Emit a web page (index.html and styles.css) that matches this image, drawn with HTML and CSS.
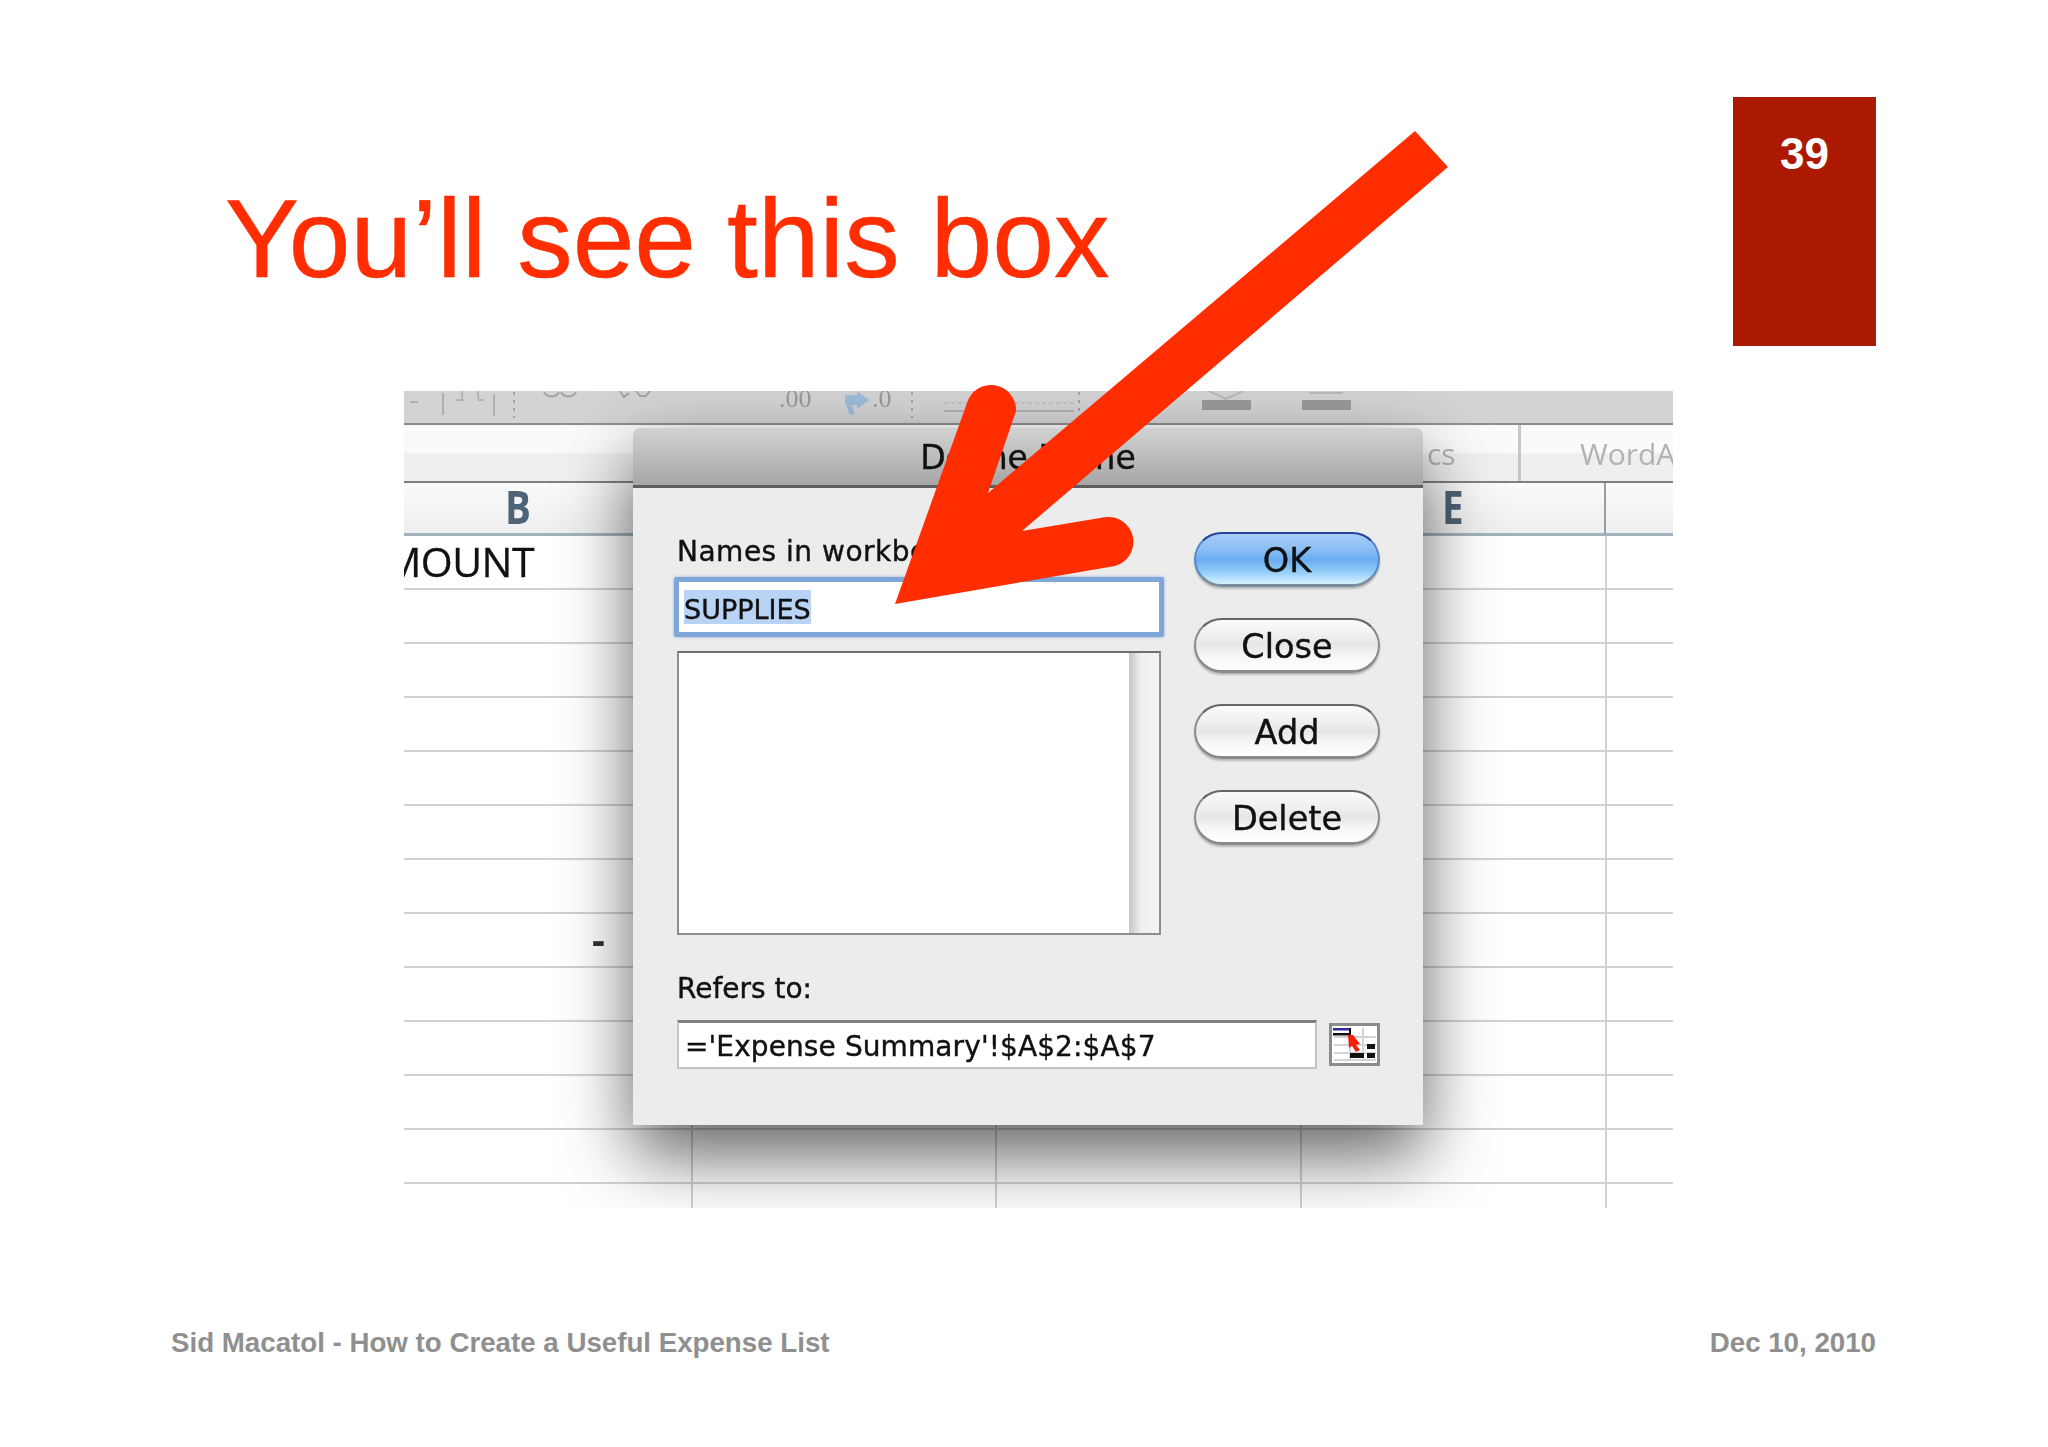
FILE: index.html
```html
<!DOCTYPE html>
<html lang="en">
<head>
<meta charset="utf-8">
<title>You'll see this box</title>
<link rel="stylesheet" href="styles.css">
</head>
<body>
<main class="slide">
  <header class="top">
    <h1 class="title">You’ll see this box</h1>
    <div class="badge">39</div>
  </header>

  <section class="shot">
    <div class="toolbar">
      <svg class="toolbar-art" viewBox="0 0 1269 32" width="1269" height="32">
        <g stroke="#a4a4a6" stroke-width="2" fill="none">
          <path d="M6 11h8M39 2v22M90 3v22" stroke="#b0b0b2"/>
          <path d="M110 1v26M508 1v26M675 1v26" stroke-dasharray="3 5"/>
          <path d="M58 0v8M52 9h8M74 0v8M74 9h6" stroke="#b4b4b6"/>
          <path d="M140 1c3 6 12 6 15 0M157 1c3 6 12 6 15 0M216 0l4 6 5-4M232 0l4 5h6l4-5"/>
          <path d="M540 20h58M610 20h60" stroke="#b4b4b6"/>
          <path d="M540 12h58M610 12h60" stroke="#c2c2c4" stroke-dasharray="4 3"/>
          <path d="M805 0l17 8 17-8M905 2h34" stroke="#b8b8ba"/>
        </g>
        <text x="375" y="16" class="toolbar-num">.00</text>
        <path d="M441 4h12V0l12 9-12 9v-4h-5l3 9-5 1-5-12z" fill="#9fbbd8"/>
        <text x="468" y="16" class="toolbar-num">.0</text>
        <rect x="798" y="9" width="49" height="10" fill="#9a9a9c"/>
        <rect x="898" y="9" width="49" height="10" fill="#9a9a9c"/>
      </svg>
    </div>

    <div class="tabs">
      <span class="tab-cs">cs</span>
      <span class="tab-word">WordArt</span>
    </div>

    <div class="col-heads">
      <span class="col-letter col-b">B</span>
      <span class="col-letter col-e">E</span>
    </div>

    <div class="row"><div class="amount">AMOUNT</div></div>
    <div class="row"></div>
    <div class="row"></div>
    <div class="row"></div>
    <div class="row"></div>
    <div class="row"></div>
    <div class="row"></div>
    <div class="row"><div class="dash">-</div></div>
    <div class="row"></div>
    <div class="row"></div>
    <div class="row"></div>
    <div class="row"></div>
    <div class="row"></div>

    <div class="dialog">
      <div class="dialog-title">Define Name</div>
      <div class="dialog-body">
        <div class="dialog-main">
          <div class="names">
            <div class="label label-names">Names in workbook:</div>
            <div class="name-field"><span class="selected">SUPPLIES</span></div>
            <div class="listbox"><div class="scrollbar"></div></div>
          </div>
          <div class="buttons">
            <div class="btn btn-ok">OK</div>
            <div class="btn">Close</div>
            <div class="btn">Add</div>
            <div class="btn">Delete</div>
          </div>
        </div>
        <div class="label label-refers">Refers to:</div>
        <div class="refers">
          <div class="refers-field">='Expense Summary'!$A$2:$A$7</div>
          <svg class="picker" viewBox="0 0 51 43" width="51" height="43">
            <rect x="1.5" y="1.5" width="48" height="40" fill="#fff" stroke="#8c8c8c" stroke-width="3"/>
            <path d="M5 14h42M5 22h42M5 30h42M5 37h42M21 5v32M34 5v32" stroke="#d4d4d4" stroke-width="2" fill="none"/>
            <rect x="4" y="5" width="17" height="2.5" fill="#2b2b9a"/>
            <rect x="4" y="10" width="17" height="2.5" fill="#111"/>
            <rect x="20" y="5" width="2" height="7" fill="#111"/>
            <path d="M19 12h5l7 9-4 1 4 5-4 2-4-6-3 2z" fill="#f5200a"/>
            <rect x="21" y="30" width="14" height="5" fill="#111"/>
            <rect x="38" y="21" width="8" height="5" fill="#111"/>
            <rect x="38" y="30" width="8" height="5" fill="#111"/>
          </svg>
        </div>
      </div>
    </div>
  </section>

  <footer class="footer">
    <span>Sid Macatol - How to Create a Useful Expense List</span>
    <span>Dec 10, 2010</span>
  </footer>

  <svg class="arrow" viewBox="0 0 2048 1447" width="2048" height="1447" aria-hidden="true">
    <path d="M1415 131 L1448 167 L1022 531 L1106 517 A25 25 0 0 1 1115 566 L895 604 L967 403 A25 25 0 0 1 1016 411 L988 493 Z" fill="#ff2d00"/>
  </svg>
</main>
</body>
</html>
```
FILE: styles.css
```css
* { box-sizing: border-box; }

html, body {
  margin: 0;
  background: #fff;
}

.slide {
  position: relative;
  width: 2048px;
  height: 1447px;
  padding: 97px 172px 0 171px;
  overflow: hidden;
  font-family: "Liberation Sans", Arial, sans-serif;
}

.top {
  display: flex;
  justify-content: space-between;
  align-items: flex-start;
  height: 294px;
}

.title {
  margin: 82px 0 0 54px;
  font-size: 111px;
  line-height: 120px;
  font-weight: 400;
  color: #ff2d00;
  white-space: nowrap;
  -webkit-text-stroke: 0.5px #ff2d00;
}

.badge {
  width: 143px;
  height: 249px;
  padding-top: 32px;
  background: #ab1a00;
  color: #fff;
  font-size: 44px;
  line-height: 50px;
  font-weight: 700;
  text-align: center;
}

/* Screenshot of the spreadsheet */
.shot {
  position: relative;
  width: 1269px;
  height: 817px;
  margin-left: 233px;
  overflow: hidden;
  background: #fff;
  font-family: "Open Sans", sans-serif;
  filter: blur(0.6px);
}

.toolbar {
  height: 34px;
  background: #d3d3d5;
  border-bottom: 2px solid #8e8e90;
}

.toolbar-art { display: block; }

.toolbar-num {
  font-family: "Liberation Serif", serif;
  font-size: 26px;
  fill: #9a9a9c;
}

.tabs {
  display: flex;
  align-items: flex-start;
  height: 56px;
  padding: 14px 0 0 1023px;
  background: linear-gradient(#fafafa 0, #fafafa 28px, #efefef 28px, #efefef 100%);
  font-size: 30px;
  line-height: 30px;
  color: #b2b2b4;
}

.tab-cs {
  flex: none;
  width: 91px;
}

.tab-word {
  flex: none;
  height: 56px;
  margin-top: -14px;
  padding: 14px 0 0 59px;
  border-left: 3px solid #c6c6c8;
  white-space: nowrap;
}

.col-heads {
  display: flex;
  height: 55px;
  padding-left: 101px;
  background:
    linear-gradient(#93a0aa, #93a0aa) 1200px 0 / 2px 100% no-repeat,
    linear-gradient(#fafafa, #eeeeee);
  border-top: 2px solid #808082;
  border-bottom: 3px solid #a2b2bc;
  font-size: 47px;
  line-height: 46px;
  font-weight: 700;
  color: #4d6478;
}

.col-letter {
  display: inline-block;
  transform: scaleX(0.82);
  transform-origin: left center;
}

.col-e { margin-left: 905px; }

.row {
  height: 54px;
  border-bottom: 2px solid #d2d2d4;
  background:
    linear-gradient(#d2d2d4, #d2d2d4) 287px 0 / 2px 100% no-repeat,
    linear-gradient(#d2d2d4, #d2d2d4) 591px 0 / 2px 100% no-repeat,
    linear-gradient(#d2d2d4, #d2d2d4) 896px 0 / 2px 100% no-repeat,
    linear-gradient(#d2d2d4, #d2d2d4) 1201px 0 / 2px 100% no-repeat;
}

.amount {
  display: flex;
  justify-content: flex-end;
  width: 130px;
  font-size: 41px;
  line-height: 50px;
  letter-spacing: -0.5px;
  color: #111;
  white-space: nowrap;
  -webkit-text-stroke: 0.3px #111;
}

.dash {
  margin-left: 188px;
  font-size: 40px;
  line-height: 50px;
  font-weight: 700;
  color: #333;
}

/* Dialog */
.dialog {
  position: absolute;
  left: 229px;
  top: 37px;
  width: 790px;
  height: 697px;
  display: flex;
  flex-direction: column;
  border-radius: 7px 7px 0 0;
  box-shadow: 0 30px 70px rgba(0, 0, 0, 0.62);
  background: #ececed;
  font-family: "DejaVu Sans", sans-serif;
  color: #111;
  -webkit-text-stroke: 0.4px #111;
}

.dialog-title {
  height: 60px;
  border-radius: 7px 7px 0 0;
  border-bottom: 3px solid #5e5e5e;
  background: linear-gradient(#d2d2d2, #a6a6a6);
  font-size: 33px;
  line-height: 60px;
  text-align: center;
}

.dialog-body {
  flex: 1;
  padding: 0 43px 0 44px;
}

.dialog-main {
  display: flex;
  gap: 33px;
}

.names { width: 484px; }

.label {
  font-size: 28px;
  line-height: 34px;
}

.label-names {
  margin-top: 47px;
  letter-spacing: 0.5px;
}

.name-field {
  display: flex;
  align-items: center;
  height: 60px;
  margin: 8px -3px 0;
  padding-left: 5px;
  background: #fff;
  border: 5px solid #7ea6d8;
  border-radius: 2px;
  box-shadow: 0 0 3px rgba(100, 150, 220, 0.7);
  font-size: 27px;
}

.selected {
  display: inline-block;
  height: 34px;
  background: #b8d3f4;
  line-height: 40px;
}

.listbox {
  display: flex;
  justify-content: flex-end;
  height: 284px;
  margin-top: 14px;
  background: #fff;
  border: 2px solid #8e8e8e;
  border-top-color: #707070;
}

.scrollbar {
  width: 30px;
  background: linear-gradient(90deg, #c6c6c8, #efeff0 40%, #f4f4f5);
}

.buttons {
  display: flex;
  flex-direction: column;
  gap: 31px;
  width: 186px;
  padding-top: 44px;
}

.btn {
  height: 55px;
  border: 2px solid #8a8a8a;
  border-top-color: #666;
  border-bottom: 3px solid #8a8a8a;
  border-radius: 28px;
  box-shadow: 0 2px 2px rgba(0, 0, 0, 0.22);
  background: linear-gradient(#fbfbfb 0, #f0f0f0 30%, #e6e6e6 50%, #f6f6f6 72%, #ffffff 100%);
  font-size: 33.5px;
  line-height: 54px;
  text-align: center;
}

.btn-ok {
  border-color: #28459c #5a88c8 #7c8c9c;
  background: linear-gradient(#a6ccf6 0, #90c0f4 28%, #69adf2 52%, #93cdf8 76%, #d6f2ff 100%);
}

.label-refers { margin-top: 37px; }

.refers {
  display: flex;
  align-items: center;
  gap: 12px;
  margin-top: 14px;
}

.refers-field {
  width: 640px;
  height: 49px;
  padding-left: 6px;
  background: #fff;
  border: 2px solid #c4c4c4;
  border-top: 3px solid #808080;
  font-size: 28px;
  line-height: 48px;
  letter-spacing: 0.1px;
  white-space: nowrap;
}

.picker { display: block; }

/* Footer */
.footer {
  display: flex;
  justify-content: space-between;
  margin-top: 118px;
  font-size: 27.7px;
  line-height: 34px;
  font-weight: 700;
  color: #8f8f8f;
}

.arrow {
  position: absolute;
  left: 0;
  top: 0;
  pointer-events: none;
}
```
